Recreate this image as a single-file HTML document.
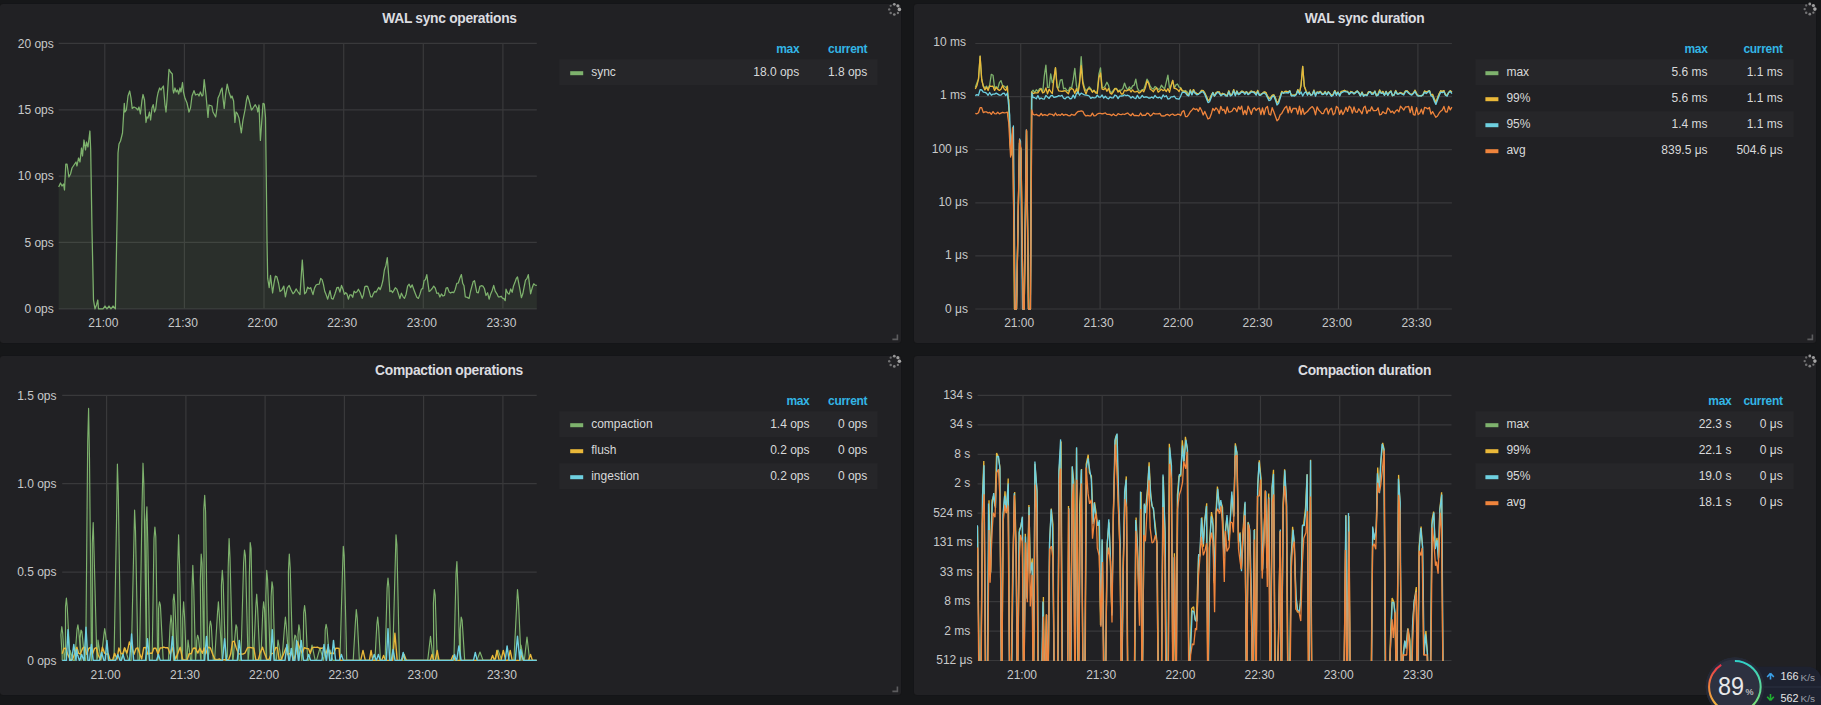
<!DOCTYPE html>
<html><head><meta charset="utf-8"><style>
html,body{margin:0;padding:0;background:#161719;width:1821px;height:705px;overflow:hidden}
body{position:relative;font-family:"Liberation Sans",sans-serif}
.p{position:absolute;background:#212124;border-radius:3px;box-shadow:0 0 1px #111214}
svg{position:absolute;left:0;top:0}
text{font-family:"Liberation Sans",sans-serif;font-size:12px;fill:#d8d9da}
.ax text{fill:#c8c9ca}
.tt{font-size:13.8px;font-weight:bold;fill:#dcdde0;letter-spacing:-0.3px}
.hd{font-weight:bold;fill:#33b5e5;letter-spacing:-0.3px}
</style></head><body>
<div class="p" style="left:0px;top:4px;width:901px;height:339px"></div><div class="p" style="left:914px;top:4px;width:902px;height:339px"></div><div class="p" style="left:0px;top:356px;width:901px;height:339px"></div><div class="p" style="left:914px;top:356px;width:902px;height:339px"></div>
<svg width="1821" height="705" viewBox="0 0 1821 705">
<g stroke="#39393b" stroke-width="1.2"><line x1="58.7" y1="43.4" x2="536.8" y2="43.4"/><line x1="58.7" y1="109.8" x2="536.8" y2="109.8"/><line x1="58.7" y1="176.1" x2="536.8" y2="176.1"/><line x1="58.7" y1="242.4" x2="536.8" y2="242.4"/><line x1="58.7" y1="308.8" x2="536.8" y2="308.8"/><line x1="104.8" y1="43.4" x2="104.8" y2="308.8"/><line x1="184.4" y1="43.4" x2="184.4" y2="308.8"/><line x1="264" y1="43.4" x2="264" y2="308.8"/><line x1="343.7" y1="43.4" x2="343.7" y2="308.8"/><line x1="423.3" y1="43.4" x2="423.3" y2="308.8"/><line x1="502.9" y1="43.4" x2="502.9" y2="308.8"/><line x1="975.3" y1="43.5" x2="1451.9" y2="43.5"/><line x1="975.3" y1="96.6" x2="1451.9" y2="96.6"/><line x1="975.3" y1="149.7" x2="1451.9" y2="149.7"/><line x1="975.3" y1="202.8" x2="1451.9" y2="202.8"/><line x1="975.3" y1="255.9" x2="1451.9" y2="255.9"/><line x1="975.3" y1="309" x2="1451.9" y2="309"/><line x1="1020.7" y1="43.5" x2="1020.7" y2="309"/><line x1="1100.1" y1="43.5" x2="1100.1" y2="309"/><line x1="1179.6" y1="43.5" x2="1179.6" y2="309"/><line x1="1259" y1="43.5" x2="1259" y2="309"/><line x1="1338.5" y1="43.5" x2="1338.5" y2="309"/><line x1="1417.9" y1="43.5" x2="1417.9" y2="309"/><line x1="62.2" y1="395.4" x2="536.7" y2="395.4"/><line x1="62.2" y1="483.7" x2="536.7" y2="483.7"/><line x1="62.2" y1="572.1" x2="536.7" y2="572.1"/><line x1="62.2" y1="660.4" x2="536.7" y2="660.4"/><line x1="106.6" y1="395.4" x2="106.6" y2="660.4"/><line x1="185.9" y1="395.4" x2="185.9" y2="660.4"/><line x1="265.1" y1="395.4" x2="265.1" y2="660.4"/><line x1="344.4" y1="395.4" x2="344.4" y2="660.4"/><line x1="423.6" y1="395.4" x2="423.6" y2="660.4"/><line x1="502.9" y1="395.4" x2="502.9" y2="660.4"/><line x1="977.6" y1="395.4" x2="1451.5" y2="395.4"/><line x1="977.6" y1="424.9" x2="1451.5" y2="424.9"/><line x1="977.6" y1="454.3" x2="1451.5" y2="454.3"/><line x1="977.6" y1="483.8" x2="1451.5" y2="483.8"/><line x1="977.6" y1="513.2" x2="1451.5" y2="513.2"/><line x1="977.6" y1="542.7" x2="1451.5" y2="542.7"/><line x1="977.6" y1="572.2" x2="1451.5" y2="572.2"/><line x1="977.6" y1="601.6" x2="1451.5" y2="601.6"/><line x1="977.6" y1="631.1" x2="1451.5" y2="631.1"/><line x1="977.6" y1="660.5" x2="1451.5" y2="660.5"/><line x1="1023" y1="395.4" x2="1023" y2="660.4"/><line x1="1102.2" y1="395.4" x2="1102.2" y2="660.4"/><line x1="1181.4" y1="395.4" x2="1181.4" y2="660.4"/><line x1="1260.5" y1="395.4" x2="1260.5" y2="660.4"/><line x1="1339.7" y1="395.4" x2="1339.7" y2="660.4"/><line x1="1418.9" y1="395.4" x2="1418.9" y2="660.4"/></g><path d="M58.7,187 L60.5,183 L62,186 L63.5,184 L64.5,190 L65.8,164 L67,164 L68.9,177 L70.5,174 L72,168 L74,165 L76,162 L77,166 L78.5,158 L80,162 L81.5,148 L82.5,156 L84,140 L85.5,150 L86.5,142 L88,147 L89.9,131 L90.7,150 L92,230 L93.5,300 L95,308.8 L96.5,305 L97.8,300 L98.5,308.8 L103,308.8 L105,306 L107,308.8 L109,306 L111,308.8 L113,306 L115.4,308.8 L117.4,200 L118,153 L119,144 L120.5,141 L122.5,133 L124.3,103.4 L125,112 L126.4,109.8 L128,96 L129.7,91 L131,98 L132.2,108.5 L134,107 L136,108 L137.9,110 L139,107 L140.4,114 L142,100 L143,94.5 L144.5,100 L146,122.5 L147,117 L148,118 L149.5,112 L150.6,120 L152,108 L153.2,104.7 L154.5,112 L155.7,109 L157,98 L158,93 L159.6,88 L161,90 L162,88 L163.4,86 L165,105 L166,112 L167,100 L169,69.4 L170.5,72 L172.3,74 L173,90 L173.6,93 L175,88 L176.2,92 L177.5,90 L178.7,94 L180,88 L181,92 L182.5,82.5 L183.5,92 L185,98.3 L187,103 L189,112 L190.5,108 L192,96 L194,90.6 L195.5,95 L197.9,94 L199,96 L200.4,92 L202,96 L203,95 L204.2,79.6 L206,95 L208,117.4 L209,105 L211.9,106 L213,112 L215.7,117 L217,108 L218,98 L219.6,94.5 L221,90 L222.1,88 L223,98 L224.2,108.5 L225.5,95 L227.2,84.2 L229,92 L231,98 L232,96 L233.6,101 L234.9,122.5 L236,112 L237.4,113.6 L239,118 L241.3,132.8 L243,120 L245,110 L246.5,100 L247.6,95.7 L249,100 L251.5,110 L253,108 L255.3,104.7 L257,108 L257.8,112 L259,105 L260.4,140.4 L261.5,125 L263,103.4 L264.3,104 L265.5,117.4 L266.3,178.7 L267,240 L267.7,278.4 L269.2,287.7 L270.5,275.4 L272.6,293 L274,283.2 L275.4,276.1 L276.9,276.9 L278.5,283 L280,291.5 L281.9,289.9 L283.8,286.1 L285.4,296.9 L287.3,287.9 L289.2,285.4 L291.1,289.9 L293,293.8 L294.6,292 L296.1,288.9 L297.7,291.5 L300,294.6 L302.3,260 L304.6,293.8 L306.1,292.3 L307.6,287.2 L309.2,288.7 L310.7,287.7 L313,294.6 L314.5,288.1 L316.1,285 L317.6,284.3 L319.2,284.1 L320.7,278.4 L322.1,279.6 L323.4,284.4 L324.8,291.5 L326.1,294.6 L327.7,299.2 L330,290.7 L331.5,298.4 L333,299.2 L334.9,294 L336.9,287.7 L338.4,287.3 L339.9,292.1 L341.5,285.4 L343,289.2 L344.4,294.4 L345.7,292.6 L347,294 L348.4,299.2 L349.8,294.9 L351.3,294.9 L352.7,297.3 L354.1,291.1 L355.5,292.7 L357,291.7 L358.4,289.2 L360.3,292.8 L362.2,298.4 L363.5,294.7 L364.8,286.9 L366.1,286.1 L367.6,286.4 L369.2,291.1 L370.7,296.9 L372.1,296.9 L373.4,293.6 L374.8,291.4 L376.1,292.2 L377.4,289.8 L378.8,287.3 L380.1,289.7 L381.5,286.1 L382.9,280.5 L384.4,270 L385.9,265.4 L387.3,257.7 L389.9,291.5 L391.2,290.7 L392.6,292.5 L393.9,290.4 L395.3,287.7 L396.9,289.1 L398.4,293.8 L399.9,298.6 L401.4,293.2 L403,296.6 L404.5,298.4 L406.1,294.2 L407.6,286.1 L409.1,284.2 L410.6,287.6 L412.2,284.9 L413.7,289.2 L415.3,293.5 L416.8,297.3 L418.4,298.4 L419.9,294.4 L421.4,289.2 L422.8,288.4 L424.1,280.5 L425.4,279.7 L426.8,274.6 L429.1,291.5 L430.6,290.4 L432.2,288.5 L433.7,286.1 L435.3,288.1 L436.8,293.3 L438.4,293 L439.9,297 L441.4,294 L443,296 L444.5,295.4 L446.1,288.2 L447.6,287.7 L449.1,291.9 L450.6,293 L452.1,292.1 L453.7,292.7 L455.2,289.4 L456.8,283.4 L458.3,283 L459.9,277.9 L461.4,274.6 L462.7,283.3 L464,285.8 L465.3,296.9 L467.2,297.4 L469.1,298.4 L470.5,291.5 L471.8,286.6 L473.1,281.8 L474.5,280.7 L476.8,292.3 L478.3,292.8 L479.9,286.4 L481.4,285.7 L482.9,286.1 L484.4,288.5 L486,295.5 L487.6,292.7 L489.1,299.2 L490.6,294.2 L492.2,290.4 L493.7,285.4 L495.2,291.2 L496.8,293.6 L498.3,296.8 L499.8,296.9 L501.1,296.2 L502.5,298.2 L503.9,298.7 L505.2,300.7 L506,289.2 L507.6,292.9 L509.1,294.2 L510.7,288.9 L512.2,292.3 L513.5,286 L514.9,282.6 L516.2,278.7 L517.5,276.9 L519.5,287.2 L521.4,297.7 L522.8,293.8 L524.2,286.7 L525.5,280.1 L526.9,278.6 L528.3,274.6 L530.6,293.8 L532.2,287.8 L533.7,283.8 L535.2,285.1 L536.8,285.4 L536.8,308.8 L58.7,308.8 Z" fill="#7eb26d" fill-opacity="0.1" stroke="none"/><path d="M58.7,187 L60.5,183 L62,186 L63.5,184 L64.5,190 L65.8,164 L67,164 L68.9,177 L70.5,174 L72,168 L74,165 L76,162 L77,166 L78.5,158 L80,162 L81.5,148 L82.5,156 L84,140 L85.5,150 L86.5,142 L88,147 L89.9,131 L90.7,150 L92,230 L93.5,300 L95,308.8 L96.5,305 L97.8,300 L98.5,308.8 L103,308.8 L105,306 L107,308.8 L109,306 L111,308.8 L113,306 L115.4,308.8 L117.4,200 L118,153 L119,144 L120.5,141 L122.5,133 L124.3,103.4 L125,112 L126.4,109.8 L128,96 L129.7,91 L131,98 L132.2,108.5 L134,107 L136,108 L137.9,110 L139,107 L140.4,114 L142,100 L143,94.5 L144.5,100 L146,122.5 L147,117 L148,118 L149.5,112 L150.6,120 L152,108 L153.2,104.7 L154.5,112 L155.7,109 L157,98 L158,93 L159.6,88 L161,90 L162,88 L163.4,86 L165,105 L166,112 L167,100 L169,69.4 L170.5,72 L172.3,74 L173,90 L173.6,93 L175,88 L176.2,92 L177.5,90 L178.7,94 L180,88 L181,92 L182.5,82.5 L183.5,92 L185,98.3 L187,103 L189,112 L190.5,108 L192,96 L194,90.6 L195.5,95 L197.9,94 L199,96 L200.4,92 L202,96 L203,95 L204.2,79.6 L206,95 L208,117.4 L209,105 L211.9,106 L213,112 L215.7,117 L217,108 L218,98 L219.6,94.5 L221,90 L222.1,88 L223,98 L224.2,108.5 L225.5,95 L227.2,84.2 L229,92 L231,98 L232,96 L233.6,101 L234.9,122.5 L236,112 L237.4,113.6 L239,118 L241.3,132.8 L243,120 L245,110 L246.5,100 L247.6,95.7 L249,100 L251.5,110 L253,108 L255.3,104.7 L257,108 L257.8,112 L259,105 L260.4,140.4 L261.5,125 L263,103.4 L264.3,104 L265.5,117.4 L266.3,178.7 L267,240 L267.7,278.4 L269.2,287.7 L270.5,275.4 L272.6,293 L274,283.2 L275.4,276.1 L276.9,276.9 L278.5,283 L280,291.5 L281.9,289.9 L283.8,286.1 L285.4,296.9 L287.3,287.9 L289.2,285.4 L291.1,289.9 L293,293.8 L294.6,292 L296.1,288.9 L297.7,291.5 L300,294.6 L302.3,260 L304.6,293.8 L306.1,292.3 L307.6,287.2 L309.2,288.7 L310.7,287.7 L313,294.6 L314.5,288.1 L316.1,285 L317.6,284.3 L319.2,284.1 L320.7,278.4 L322.1,279.6 L323.4,284.4 L324.8,291.5 L326.1,294.6 L327.7,299.2 L330,290.7 L331.5,298.4 L333,299.2 L334.9,294 L336.9,287.7 L338.4,287.3 L339.9,292.1 L341.5,285.4 L343,289.2 L344.4,294.4 L345.7,292.6 L347,294 L348.4,299.2 L349.8,294.9 L351.3,294.9 L352.7,297.3 L354.1,291.1 L355.5,292.7 L357,291.7 L358.4,289.2 L360.3,292.8 L362.2,298.4 L363.5,294.7 L364.8,286.9 L366.1,286.1 L367.6,286.4 L369.2,291.1 L370.7,296.9 L372.1,296.9 L373.4,293.6 L374.8,291.4 L376.1,292.2 L377.4,289.8 L378.8,287.3 L380.1,289.7 L381.5,286.1 L382.9,280.5 L384.4,270 L385.9,265.4 L387.3,257.7 L389.9,291.5 L391.2,290.7 L392.6,292.5 L393.9,290.4 L395.3,287.7 L396.9,289.1 L398.4,293.8 L399.9,298.6 L401.4,293.2 L403,296.6 L404.5,298.4 L406.1,294.2 L407.6,286.1 L409.1,284.2 L410.6,287.6 L412.2,284.9 L413.7,289.2 L415.3,293.5 L416.8,297.3 L418.4,298.4 L419.9,294.4 L421.4,289.2 L422.8,288.4 L424.1,280.5 L425.4,279.7 L426.8,274.6 L429.1,291.5 L430.6,290.4 L432.2,288.5 L433.7,286.1 L435.3,288.1 L436.8,293.3 L438.4,293 L439.9,297 L441.4,294 L443,296 L444.5,295.4 L446.1,288.2 L447.6,287.7 L449.1,291.9 L450.6,293 L452.1,292.1 L453.7,292.7 L455.2,289.4 L456.8,283.4 L458.3,283 L459.9,277.9 L461.4,274.6 L462.7,283.3 L464,285.8 L465.3,296.9 L467.2,297.4 L469.1,298.4 L470.5,291.5 L471.8,286.6 L473.1,281.8 L474.5,280.7 L476.8,292.3 L478.3,292.8 L479.9,286.4 L481.4,285.7 L482.9,286.1 L484.4,288.5 L486,295.5 L487.6,292.7 L489.1,299.2 L490.6,294.2 L492.2,290.4 L493.7,285.4 L495.2,291.2 L496.8,293.6 L498.3,296.8 L499.8,296.9 L501.1,296.2 L502.5,298.2 L503.9,298.7 L505.2,300.7 L506,289.2 L507.6,292.9 L509.1,294.2 L510.7,288.9 L512.2,292.3 L513.5,286 L514.9,282.6 L516.2,278.7 L517.5,276.9 L519.5,287.2 L521.4,297.7 L522.8,293.8 L524.2,286.7 L525.5,280.1 L526.9,278.6 L528.3,274.6 L530.6,293.8 L532.2,287.8 L533.7,283.8 L535.2,285.1 L536.8,285.4" fill="none" stroke="#7eb26d" stroke-width="1.25" stroke-linejoin="round"/><path d="M975.3,87.4 L976.9,83.1 L978.5,79.1 L980.1,56.2 L981.7,79.5 L983.3,86 L984.9,88 L986.5,86.1 L988.1,89.1 L989.7,85 L991.3,74.3 L993,75.2 L994.6,87.8 L996.2,86.8 L997.8,88.4 L999.4,82.7 L1001,80.6 L1002.6,85.6 L1004.2,86.1 L1005.8,87.6 L1007.4,86 L1007.8,95 L1008.7,100 L1010,140 L1011,155 L1013,128 L1014.5,309 L1016.5,309 L1019.5,143 L1021,150 L1023,309 L1024.2,309 L1026.6,131 L1028.5,309 L1030.3,309 L1031.6,92 L1033.1,90.2 L1034.7,92.6 L1036.3,89.8 L1037.9,91.5 L1039.5,88.7 L1041.1,88.4 L1042.7,92.4 L1044.3,76.1 L1045.9,65.1 L1047.5,87.4 L1049.1,87.4 L1050.7,73.9 L1052.3,82.7 L1053.9,78.9 L1055.5,67.7 L1057.1,86.9 L1058.7,87.9 L1060.3,80.2 L1062,79.5 L1063.6,88.8 L1065.2,88.2 L1066.8,90.4 L1068.4,91 L1070,87.2 L1071.6,88.2 L1073.2,79.9 L1074.8,68.3 L1076.4,85.2 L1078,92.3 L1079.6,80.8 L1081.2,56.7 L1082.8,81.1 L1084.4,87.4 L1086,91 L1087.6,89.3 L1089.2,86.9 L1090.8,88.9 L1092.4,91.9 L1094,90.2 L1095.7,92.6 L1097.3,91.5 L1098.9,74.2 L1100.5,67.8 L1102.1,87.8 L1103.7,87.7 L1105.3,85.8 L1106.9,82.3 L1108.5,85.2 L1110.1,91.6 L1111.7,92.7 L1113.3,90.3 L1114.9,88.3 L1116.5,88.5 L1118.1,91 L1119.7,90.1 L1121.3,90.1 L1122.9,88.5 L1124.5,83.1 L1126.1,87.4 L1127.7,90.2 L1129.4,86.9 L1131,89.1 L1132.6,85.9 L1134.2,85.1 L1135.8,79.1 L1137.4,88.2 L1139,90.8 L1140.6,91.3 L1142.2,89.7 L1143.8,89.3 L1145.4,84.6 L1147,79.1 L1148.6,81.9 L1150.2,86.2 L1151.8,88.3 L1153.4,89.2 L1155,86.5 L1156.6,87.6 L1158.2,89.5 L1159.8,88.9 L1161.4,85.2 L1163.1,87.5 L1164.7,88.7 L1166.3,82.2 L1167.9,75.2 L1169.5,88.1 L1171.1,85.6 L1172.7,80.4 L1174.3,88.4 L1175.9,84.9 L1177.5,84 L1179.1,87.1 L1180.7,87.7 L1182.3,90.9 L1183.9,91 L1185.5,90.5 L1187.1,91.9 L1188.7,95.1 L1190.3,89.9 L1191.9,93.9 L1193.5,89.6 L1195.1,92.8 L1196.8,93.4 L1198.4,93.9 L1200,92.7 L1201.6,90.5 L1203.2,90.6 L1204.8,93 L1206.4,96.5 L1208,100.6 L1209.6,99.7 L1211.2,95.6 L1212.8,92.5 L1214.4,95.9 L1216,92.9 L1217.6,91.8 L1219.2,91.8 L1220.8,95.6 L1222.4,93.3 L1224,94 L1225.6,94.7 L1227.2,95.8 L1228.8,90.8 L1230.4,94.9 L1232.1,94.3 L1233.7,89.7 L1235.3,94.9 L1236.9,91 L1238.5,94.4 L1240.1,92.8 L1241.7,91.1 L1243.3,91.7 L1244.9,93 L1246.5,91.6 L1248.1,94.2 L1249.7,92.5 L1251.3,91.1 L1252.9,91.9 L1254.5,92 L1256.1,94.1 L1257.7,90.4 L1259.3,94.9 L1260.9,94.5 L1262.5,93.2 L1264.1,92 L1265.8,92.3 L1267.4,95.9 L1269,98.6 L1270.6,97.9 L1272.2,95.4 L1273.8,94.8 L1275.4,97.9 L1277,103 L1278.6,101.2 L1280.2,96.1 L1281.8,91.5 L1283.4,93 L1285,91.4 L1286.6,91.4 L1288.2,91.8 L1289.8,90.9 L1291.4,95.5 L1293,95.2 L1294.6,95.1 L1296.2,94.2 L1297.8,89.6 L1299.5,92.8 L1301.1,84.8 L1302.7,66.3 L1304.3,86.3 L1305.9,90.5 L1307.5,94.1 L1309.1,92.1 L1310.7,95 L1312.3,94.5 L1313.9,90.1 L1315.5,94.9 L1317.1,92.1 L1318.7,92.4 L1320.3,91.4 L1321.9,93.4 L1323.5,94.2 L1325.1,91.5 L1326.7,94.5 L1328.3,91.8 L1329.9,93.4 L1331.5,95.5 L1333.2,94.2 L1334.8,90.6 L1336.4,94 L1338,92.2 L1339.6,95.3 L1341.2,91.5 L1342.8,91 L1344.4,90.4 L1346,91.4 L1347.6,91.5 L1349.2,94 L1350.8,91.5 L1352.4,92.1 L1354,93.7 L1355.6,92.1 L1357.2,91 L1358.8,92.6 L1360.4,95.6 L1362,92.1 L1363.6,95.7 L1365.2,94.5 L1366.9,95.1 L1368.5,91.7 L1370.1,91.6 L1371.7,92.9 L1373.3,93.6 L1374.9,91.1 L1376.5,95.7 L1378.1,93.8 L1379.7,90 L1381.3,93.3 L1382.9,91.5 L1384.5,95.1 L1386.1,91.3 L1387.7,95.1 L1389.3,92.2 L1390.9,91 L1392.5,95.7 L1394.1,94.9 L1395.7,90.5 L1397.3,93.8 L1398.9,93.3 L1400.5,92.5 L1402.2,93.4 L1403.8,93.8 L1405.4,91 L1407,90.8 L1408.6,92.4 L1410.2,94.1 L1411.8,94.3 L1413.4,93 L1415,90.2 L1416.6,93.6 L1418.2,95.5 L1419.8,95.6 L1421.4,95.8 L1423,94.7 L1424.6,91 L1426.2,92.1 L1427.8,91.4 L1429.4,90.6 L1431,94.9 L1432.6,94.5 L1434.2,98.9 L1435.9,102.4 L1437.5,98.1 L1439.1,93.7 L1440.7,90.7 L1442.3,91.6 L1443.9,90.6 L1445.5,94.9 L1447.1,95.3 L1448.7,92.4 L1450.3,90.6 L1451.9,92.2" fill="none" stroke="#7eb26d" stroke-width="1.3" stroke-linejoin="round"/><path d="M975.3,89 L976.9,85.8 L978.5,79.1 L980.1,56.2 L981.7,79.5 L983.3,86.3 L984.9,89.9 L986.5,87.2 L988.1,90.5 L989.7,86 L991.3,86.3 L993,86.2 L994.6,90.4 L996.2,87.3 L997.8,89.4 L999.4,90.4 L1001,89.2 L1002.6,85.6 L1004.2,89 L1005.8,90.4 L1007.4,86.6 L1007.8,95 L1008.7,100 L1010,140 L1011,155 L1013,128 L1014.5,309 L1016.5,309 L1019.5,143 L1021,150 L1023,309 L1024.2,309 L1026.6,131 L1028.5,309 L1030.3,309 L1031.6,92 L1033.1,93.6 L1034.7,92.9 L1036.3,92.8 L1037.9,92.9 L1039.5,90.3 L1041.1,88.9 L1042.7,93 L1044.3,92 L1045.9,87.9 L1047.5,93.8 L1049.1,89.2 L1050.7,91.6 L1052.3,93.6 L1053.9,78.9 L1055.5,67.7 L1057.1,86.9 L1058.7,90.8 L1060.3,91.1 L1062,91.4 L1063.6,91 L1065.2,90.6 L1066.8,92.2 L1068.4,93.8 L1070,89.5 L1071.6,88.7 L1073.2,89.3 L1074.8,93.5 L1076.4,88.7 L1078,93.9 L1079.6,83.2 L1081.2,65.6 L1082.8,83.5 L1084.4,89.9 L1086,94.1 L1087.6,89.5 L1089.2,88.6 L1090.8,89.5 L1092.4,92.3 L1094,90.5 L1095.7,92.9 L1097.3,93.3 L1098.9,77.8 L1100.5,72.9 L1102.1,89.1 L1103.7,89.7 L1105.3,87.9 L1106.9,91.3 L1108.5,88.5 L1110.1,93.1 L1111.7,94.1 L1113.3,91.9 L1114.9,88.6 L1116.5,88.8 L1118.1,92.1 L1119.7,90.7 L1121.3,94 L1122.9,94 L1124.5,90.2 L1126.1,91 L1127.7,90.4 L1129.4,89.3 L1131,92 L1132.6,89.9 L1134.2,91.9 L1135.8,91.8 L1137.4,91.2 L1139,93.1 L1140.6,92.2 L1142.2,90.1 L1143.8,91.8 L1145.4,87.8 L1147,81 L1148.6,83.3 L1150.2,89.1 L1151.8,90.2 L1153.4,91.7 L1155,89.4 L1156.6,87.9 L1158.2,92.2 L1159.8,90.8 L1161.4,89.1 L1163.1,90.7 L1164.7,89.5 L1166.3,91.5 L1167.9,88.6 L1169.5,92.3 L1171.1,85.6 L1172.7,80.4 L1174.3,88.4 L1175.9,88.6 L1177.5,89.7 L1179.1,91.6 L1180.7,88.1 L1182.3,90.9 L1183.9,91.4 L1185.5,91.4 L1187.1,94.3 L1188.7,95.1 L1190.3,89.9 L1191.9,93.9 L1193.5,89.6 L1195.1,92.8 L1196.8,93.4 L1198.4,93.9 L1200,92.7 L1201.6,90.5 L1203.2,90.6 L1204.8,93 L1206.4,96.5 L1208,100.6 L1209.6,99.7 L1211.2,95.6 L1212.8,92.5 L1214.4,95.9 L1216,92.9 L1217.6,91.8 L1219.2,91.8 L1220.8,95.6 L1222.4,93.3 L1224,94 L1225.6,94.7 L1227.2,95.8 L1228.8,90.8 L1230.4,94.9 L1232.1,94.3 L1233.7,89.7 L1235.3,94.9 L1236.9,91 L1238.5,94.4 L1240.1,92.8 L1241.7,91.1 L1243.3,91.7 L1244.9,93 L1246.5,91.6 L1248.1,94.2 L1249.7,92.5 L1251.3,91.1 L1252.9,91.9 L1254.5,92 L1256.1,94.1 L1257.7,90.4 L1259.3,94.9 L1260.9,94.5 L1262.5,93.2 L1264.1,92 L1265.8,92.3 L1267.4,95.9 L1269,98.6 L1270.6,97.9 L1272.2,95.4 L1273.8,94.8 L1275.4,97.9 L1277,103 L1278.6,101.2 L1280.2,96.1 L1281.8,91.5 L1283.4,93 L1285,91.4 L1286.6,91.4 L1288.2,91.8 L1289.8,90.9 L1291.4,95.5 L1293,95.2 L1294.6,95.1 L1296.2,94.2 L1297.8,89.6 L1299.5,92.8 L1301.1,84.8 L1302.7,66.3 L1304.3,86.3 L1305.9,90.5 L1307.5,94.1 L1309.1,92.1 L1310.7,95 L1312.3,94.5 L1313.9,90.1 L1315.5,94.9 L1317.1,92.1 L1318.7,92.4 L1320.3,91.4 L1321.9,93.4 L1323.5,94.2 L1325.1,91.5 L1326.7,94.5 L1328.3,91.8 L1329.9,93.4 L1331.5,95.5 L1333.2,94.2 L1334.8,90.6 L1336.4,94 L1338,92.2 L1339.6,95.3 L1341.2,91.5 L1342.8,91 L1344.4,90.4 L1346,91.4 L1347.6,91.5 L1349.2,94 L1350.8,91.5 L1352.4,92.1 L1354,93.7 L1355.6,92.1 L1357.2,91 L1358.8,92.6 L1360.4,95.6 L1362,92.1 L1363.6,95.7 L1365.2,94.5 L1366.9,95.1 L1368.5,91.7 L1370.1,91.6 L1371.7,92.9 L1373.3,93.6 L1374.9,91.1 L1376.5,95.7 L1378.1,93.8 L1379.7,90 L1381.3,93.3 L1382.9,91.5 L1384.5,95.1 L1386.1,91.3 L1387.7,95.1 L1389.3,92.2 L1390.9,91 L1392.5,95.7 L1394.1,94.9 L1395.7,90.5 L1397.3,93.8 L1398.9,93.3 L1400.5,92.5 L1402.2,93.4 L1403.8,93.8 L1405.4,91 L1407,90.8 L1408.6,92.4 L1410.2,94.1 L1411.8,94.3 L1413.4,93 L1415,90.2 L1416.6,93.6 L1418.2,95.5 L1419.8,95.6 L1421.4,95.8 L1423,94.7 L1424.6,91 L1426.2,92.1 L1427.8,91.4 L1429.4,90.6 L1431,94.9 L1432.6,94.5 L1434.2,98.9 L1435.9,102.4 L1437.5,98.1 L1439.1,93.7 L1440.7,90.7 L1442.3,91.6 L1443.9,90.6 L1445.5,94.9 L1447.1,95.3 L1448.7,92.4 L1450.3,90.6 L1451.9,92.2" fill="none" stroke="#eab839" stroke-width="1.3" stroke-linejoin="round"/><path d="M975.3,95.6 L976.9,94.6 L978.5,95.3 L980.1,89.6 L981.7,90 L983.3,92.2 L984.9,92.3 L986.5,93.1 L988.1,95.3 L989.7,92.5 L991.3,95.2 L993,94.1 L994.6,94.1 L996.2,93.1 L997.8,94.1 L999.4,95.1 L1001,95.1 L1002.6,93.5 L1004.2,93.1 L1005.8,95.6 L1007.4,93 L1007.8,97 L1008.7,106 L1009.7,115 L1010.6,150 L1013.4,126 L1015.2,309 L1016.5,309 L1019.6,139 L1020.5,141 L1022.5,309 L1024,309 L1026.3,130 L1028.5,309 L1030.5,309 L1031.8,93 L1033.1,97.5 L1034.7,97.7 L1036.3,98.8 L1037.9,95.6 L1039.5,99.1 L1041.1,98 L1042.7,98.8 L1044.3,99.1 L1045.9,95.4 L1047.5,97.1 L1049.1,98.4 L1050.7,95.9 L1052.3,95.4 L1053.9,97.4 L1055.5,97 L1057.1,96.7 L1058.7,95.6 L1060.3,96.2 L1062,95.3 L1063.6,98.2 L1065.2,98.8 L1066.8,97.1 L1068.4,96.9 L1070,98.9 L1071.6,98.5 L1073.2,95.1 L1074.8,98.2 L1076.4,93.7 L1078,91.8 L1079.6,95.2 L1081.2,93.1 L1082.8,94 L1084.4,94.9 L1086,95.1 L1087.6,95.3 L1089.2,96 L1090.8,98.4 L1092.4,97.3 L1094,97.8 L1095.7,97.6 L1097.3,95.1 L1098.9,97.2 L1100.5,97.1 L1102.1,95 L1103.7,98.1 L1105.3,96.3 L1106.9,98 L1108.5,98.9 L1110.1,97 L1111.7,97.8 L1113.3,97.9 L1114.9,95 L1116.5,95.9 L1118.1,98.6 L1119.7,96.1 L1121.3,96 L1122.9,95.9 L1124.5,94.8 L1126.1,95.7 L1127.7,95.2 L1129.4,96.1 L1131,98.1 L1132.6,96.5 L1134.2,98 L1135.8,98.7 L1137.4,95.4 L1139,98.3 L1140.6,97.8 L1142.2,95.4 L1143.8,97.3 L1145.4,97 L1147,97 L1148.6,98 L1150.2,98 L1151.8,97 L1153.4,98.2 L1155,95.4 L1156.6,97.3 L1158.2,97.8 L1159.8,97.1 L1161.4,98.7 L1163.1,94.9 L1164.7,96.8 L1166.3,95.7 L1167.9,99 L1169.5,98.7 L1171.1,96.9 L1172.7,96.8 L1174.3,96.2 L1175.9,98.5 L1177.5,98.8 L1179.1,99.2 L1180.7,96 L1182.3,92.3 L1183.9,92.2 L1185.5,92.8 L1187.1,95.2 L1188.7,96 L1190.3,91 L1191.9,94.9 L1193.5,91 L1195.1,93.3 L1196.8,94.8 L1198.4,94.4 L1200,92.9 L1201.6,91.9 L1203.2,91.9 L1204.8,94.4 L1206.4,98.5 L1208,102.6 L1209.6,101.7 L1211.2,97.6 L1212.8,92.6 L1214.4,96.1 L1216,94.2 L1217.6,92.2 L1219.2,93.2 L1220.8,95.6 L1222.4,94.7 L1224,94 L1225.6,95.9 L1227.2,96.1 L1228.8,91.6 L1230.4,96 L1232.1,95 L1233.7,90.9 L1235.3,95.9 L1236.9,91.4 L1238.5,94.6 L1240.1,93.6 L1241.7,92 L1243.3,92.4 L1244.9,94.3 L1246.5,92 L1248.1,94.6 L1249.7,93.5 L1251.3,92.1 L1252.9,92 L1254.5,93.1 L1256.1,95.2 L1257.7,91.8 L1259.3,95.3 L1260.9,95 L1262.5,93.5 L1264.1,93 L1265.8,94.3 L1267.4,97.4 L1269,100.6 L1270.6,99.9 L1272.2,96.8 L1273.8,95.9 L1275.4,99.9 L1277,105 L1278.6,103.2 L1280.2,98.1 L1281.8,92.7 L1283.4,93.1 L1285,92.8 L1286.6,92.7 L1288.2,93 L1289.8,90.9 L1291.4,95.9 L1293,95.7 L1294.6,96.1 L1296.2,94.7 L1297.8,90.7 L1299.5,94.3 L1301.1,92 L1302.7,96 L1304.3,93.1 L1305.9,91.7 L1307.5,95.3 L1309.1,92.5 L1310.7,95.1 L1312.3,94.9 L1313.9,90.9 L1315.5,96.2 L1317.1,92.2 L1318.7,93.5 L1320.3,92 L1321.9,94.5 L1323.5,94.4 L1325.1,92.3 L1326.7,94.8 L1328.3,92.1 L1329.9,93.9 L1331.5,96.3 L1333.2,95.2 L1334.8,91.3 L1336.4,95.4 L1338,92.3 L1339.6,96.1 L1341.2,92.8 L1342.8,92.2 L1344.4,91.3 L1346,91.9 L1347.6,91.8 L1349.2,94.3 L1350.8,92.5 L1352.4,92.4 L1354,93.8 L1355.6,92.9 L1357.2,91.2 L1358.8,93 L1360.4,96 L1362,92.7 L1363.6,96.3 L1365.2,94.8 L1366.9,95.7 L1368.5,93 L1370.1,91.6 L1371.7,94.3 L1373.3,94.2 L1374.9,91.5 L1376.5,95.9 L1378.1,95.2 L1379.7,91.4 L1381.3,93.4 L1382.9,92.9 L1384.5,95.3 L1386.1,91.9 L1387.7,95.3 L1389.3,92.9 L1390.9,91.4 L1392.5,95.7 L1394.1,94.9 L1395.7,91.4 L1397.3,94.2 L1398.9,94 L1400.5,93.2 L1402.2,94.2 L1403.8,95 L1405.4,91.7 L1407,91.4 L1408.6,93.2 L1410.2,94.3 L1411.8,95.1 L1413.4,93.5 L1415,91.5 L1416.6,94.8 L1418.2,96.2 L1419.8,95.8 L1421.4,95.9 L1423,94.9 L1424.6,92.2 L1426.2,93.5 L1427.8,92.2 L1429.4,90.9 L1431,95.9 L1432.6,96.5 L1434.2,100.9 L1435.9,104.4 L1437.5,100.1 L1439.1,95.7 L1440.7,92.2 L1442.3,92.7 L1443.9,91.7 L1445.5,95.3 L1447.1,96.2 L1448.7,92.5 L1450.3,91.5 L1451.9,93.6" fill="none" stroke="#6ed0e0" stroke-width="1.3" stroke-linejoin="round"/><path d="M975.3,113.4 L976.9,113.8 L978.5,112.7 L980.1,107.7 L981.7,107.7 L983.3,112.6 L984.9,111.9 L986.5,111.9 L988.1,113 L989.7,112.3 L991.3,114.4 L993,111.6 L994.6,113.6 L996.2,113.8 L997.8,112.2 L999.4,113.9 L1001,113.1 L1002.6,112.3 L1004.2,112.8 L1005.8,112.6 L1007.4,112.1 L1007.8,117 L1008.7,122.5 L1010.6,157 L1012.5,128 L1015,309 L1016.5,309 L1019.5,140 L1021,150 L1023,309 L1024.2,309 L1026.5,130 L1028.5,309 L1030.5,309 L1031.8,110 L1033.1,114.4 L1034.7,115 L1036.3,114.4 L1037.9,115.5 L1039.5,115.9 L1041.1,113.4 L1042.7,115.5 L1044.3,114.7 L1045.9,115 L1047.5,115.7 L1049.1,113.8 L1050.7,114.2 L1052.3,114.4 L1053.9,115.8 L1055.5,113 L1057.1,115.5 L1058.7,114.7 L1060.3,115.4 L1062,113.8 L1063.6,115.3 L1065.2,114.5 L1066.8,114.6 L1068.4,115.7 L1070,115.9 L1071.6,114.3 L1073.2,115 L1074.8,115.2 L1076.4,113 L1078,111.5 L1079.6,111.3 L1081.2,110.9 L1082.8,111.3 L1084.4,114.5 L1086,116 L1087.6,115.4 L1089.2,115.8 L1090.8,115.8 L1092.4,113.1 L1094,115.9 L1095.7,115.6 L1097.3,114 L1098.9,113.3 L1100.5,113.4 L1102.1,113.9 L1103.7,113.5 L1105.3,112.9 L1106.9,114.4 L1108.5,114.3 L1110.1,114.5 L1111.7,115.6 L1113.3,114 L1114.9,115.3 L1116.5,115.6 L1118.1,113.7 L1119.7,114.3 L1121.3,114.7 L1122.9,114 L1124.5,114.5 L1126.1,113.7 L1127.7,113 L1129.4,114.6 L1131,115.7 L1132.6,113.4 L1134.2,115.6 L1135.8,115.5 L1137.4,115.6 L1139,115.8 L1140.6,113 L1142.2,115.6 L1143.8,115.1 L1145.4,115.3 L1147,113.1 L1148.6,113.7 L1150.2,116 L1151.8,115.1 L1153.4,113.1 L1155,113.9 L1156.6,113.8 L1158.2,113.8 L1159.8,113.3 L1161.4,115.9 L1163.1,116 L1164.7,115.9 L1166.3,114.6 L1167.9,114.5 L1169.5,115.8 L1171.1,114.5 L1172.7,114 L1174.3,115.3 L1175.9,115.2 L1177.5,114.2 L1179.1,114.3 L1180.7,115.6 L1182.3,111.5 L1183.9,110.7 L1185.5,116.6 L1187.1,116.6 L1188.7,114.6 L1190.3,111.8 L1191.9,110.1 L1193.5,108.3 L1195.1,109.6 L1196.8,108.9 L1198.4,111.3 L1200,107.5 L1201.6,110.5 L1203.2,115 L1204.8,111.4 L1206.4,115.2 L1208,119 L1209.6,118.2 L1211.2,114.3 L1212.8,108.5 L1214.4,110.5 L1216,107.9 L1217.6,109.6 L1219.2,113.6 L1220.8,106.3 L1222.4,110.3 L1224,109.5 L1225.6,113.7 L1227.2,107 L1228.8,112.1 L1230.4,111.8 L1232.1,111 L1233.7,108.1 L1235.3,108.7 L1236.9,111.7 L1238.5,106.6 L1240.1,109.5 L1241.7,106.1 L1243.3,114.6 L1244.9,110.3 L1246.5,114.6 L1248.1,106.2 L1249.7,109.8 L1251.3,114.3 L1252.9,109 L1254.5,107.8 L1256.1,110.5 L1257.7,108.8 L1259.3,108 L1260.9,114.6 L1262.5,108 L1264.1,114.5 L1265.8,107.9 L1267.4,106.5 L1269,114.1 L1270.6,115 L1272.2,107.7 L1273.8,111.8 L1275.4,116.3 L1277,120.8 L1278.6,119.2 L1280.2,114.7 L1281.8,113.4 L1283.4,110.3 L1285,107.7 L1286.6,106.3 L1288.2,112.9 L1289.8,106.6 L1291.4,112.7 L1293,108.5 L1294.6,108.4 L1296.2,108.5 L1297.8,114.2 L1299.5,106.2 L1301.1,114.6 L1302.7,108.3 L1304.3,114.4 L1305.9,112.6 L1307.5,111.5 L1309.1,109.3 L1310.7,107.8 L1312.3,106.6 L1313.9,108.9 L1315.5,114.9 L1317.1,106.9 L1318.7,110 L1320.3,111.6 L1321.9,113.6 L1323.5,113.6 L1325.1,109.4 L1326.7,108.2 L1328.3,114 L1329.9,109.6 L1331.5,108.1 L1333.2,114.9 L1334.8,113.4 L1336.4,106.4 L1338,107.7 L1339.6,114.4 L1341.2,110 L1342.8,114.5 L1344.4,111.6 L1346,107.3 L1347.6,111.4 L1349.2,106.1 L1350.8,107.7 L1352.4,113.2 L1354,106.9 L1355.6,111.8 L1357.2,112.3 L1358.8,108.8 L1360.4,111.1 L1362,113.8 L1363.6,107.8 L1365.2,106.1 L1366.9,113.4 L1368.5,110.1 L1370.1,111 L1371.7,106.8 L1373.3,110.5 L1374.9,110.7 L1376.5,110.4 L1378.1,107.8 L1379.7,114.8 L1381.3,114.3 L1382.9,111.6 L1384.5,113.1 L1386.1,113.6 L1387.7,108 L1389.3,109.5 L1390.9,112.5 L1392.5,111.1 L1394.1,113.5 L1395.7,111 L1397.3,109.8 L1398.9,111.9 L1400.5,106.2 L1402.2,108.1 L1403.8,110.1 L1405.4,107 L1407,106.8 L1408.6,106.4 L1410.2,112.6 L1411.8,106.5 L1413.4,114.6 L1415,115 L1416.6,107.7 L1418.2,114.6 L1419.8,113.1 L1421.4,109.2 L1423,114.1 L1424.6,107.3 L1426.2,107.9 L1427.8,108.9 L1429.4,107.5 L1431,114.1 L1432.6,111.6 L1434.2,114.5 L1435.9,117.3 L1437.5,116 L1439.1,113.2 L1440.7,111.2 L1442.3,110 L1443.9,106.4 L1445.5,111.8 L1447.1,112 L1448.7,106.3 L1450.3,109.9 L1451.9,107.2" fill="none" stroke="#ef843c" stroke-width="1.3" stroke-linejoin="round"/><path d="M62.2,660.4 L62.2,656.4 L60.9,635 L61.8,626.7 L62.7,633.1 L64.4,660.4 L65.4,651.9 L65.5,606.6 L66.4,598 L67.3,608 L70,660.4 L70,650.9 L70,650 L73.1,660.4 L74.7,660.4 L77,629.7 L77.9,624.8 L78.8,631.2 L81.1,660.4 L81.1,657.8 L80.1,638.3 L81,630 L81.9,631.6 L84.8,660.4 L85.7,660.4 L87.7,441.6 L88.6,408.4 L89.5,458.5 L91.5,660.4 L92.4,651.4 L92.3,543.4 L93.2,522.5 L94.1,553.7 L96.9,660.4 L97.5,657.5 L98,640 L101,660.4 L101,660.4 L103.8,635.6 L104.7,628.6 L105.6,634.6 L108.4,660.4 L114,660.4 L116.5,522 L117.4,464 L118.3,492.3 L120.8,660.4 L121.4,660.4 L125,648 L128.6,660.4 L131.2,660.4 L133.7,550.4 L134.6,510 L135.5,530.7 L138,660.4 L139.5,660.4 L142.1,503.7 L143,463.2 L143.9,485.2 L146.5,660.4 L146.7,652.9 L146,521.7 L146.9,506.8 L147.8,542.5 L149.8,660.4 L152.1,660.4 L154,538.6 L154.9,527.1 L155.8,536.6 L157.7,660.4 L158.6,656.3 L158.6,608.3 L159.5,601.8 L160.4,605.1 L163.2,660.4 L168.4,660.4 L170.1,625.7 L171,615.2 L171.9,623.2 L173.6,660.4 L173.8,651.6 L173.1,600.5 L174,594.2 L174.9,605.3 L177.4,660.4 L178,650.6 L177.7,567.5 L178.6,534.8 L179.5,563.5 L181.6,660.4 L182.6,650 L182.7,618.3 L183.6,601.8 L184.5,615.8 L186.3,660.4 L187.1,657.9 L188,640 L190.7,660.4 L191.8,660 L191.9,590.7 L192.8,565.4 L193.7,585.6 L195.5,660.4 L196.5,650.5 L196.7,640.7 L197.6,635.2 L198.5,637.9 L200.9,660.4 L201.1,659.2 L200.3,580.2 L201.2,554 L202.1,563.7 L203.9,660.4 L204.3,655.3 L203.8,509.3 L204.7,495.3 L205.6,512 L207.7,660.4 L209,651.8 L209.5,627.3 L210.4,621 L211.3,625.5 L213.3,660.4 L214.6,660.4 L217.5,613 L218.4,601.8 L219.3,614.7 L222.2,660.4 L222.2,660 L221.4,585.8 L222.3,570.4 L223.2,582.8 L225.6,660.4 L227.4,656.2 L228.2,567.2 L229.1,538.6 L230,557.8 L232.6,660.4 L233.1,660.4 L235.1,634.4 L236,624.8 L236.9,627.2 L238.9,660.4 L240.9,660.4 L243.6,563.1 L244.5,550.1 L245.4,555.6 L248.1,660.4 L249.1,651.3 L249.3,577.3 L250.2,542.5 L251.1,548.5 L253,660.4 L253.5,660.4 L255.8,606.7 L256.7,594.2 L257.6,608.1 L259.9,660.4 L260.8,660.4 L262.7,612.9 L263.6,601.8 L264.5,608.8 L266.4,660.4 L266.6,657.3 L265.8,596.3 L266.7,570.4 L267.6,580 L270.3,660.4 L271.1,652 L271.1,596.8 L272,581.9 L272.9,587.6 L274.9,660.4 L276.4,659.4 L278,640 L281.4,660.4 L281.9,660.4 L284.5,627.2 L285.4,617.1 L286.3,626.1 L288.9,660.4 L289.1,656.1 L288.4,571.9 L289.3,554 L290.2,567.7 L292.7,660.4 L293.8,659.4 L294,642 L294.9,635 L295.8,636.4 L298.6,660.4 L298.7,657.2 L298,634.7 L298.9,624.8 L299.8,630.1 L301.7,660.4 L303.2,649.8 L303.7,612.8 L304.6,605.6 L305.5,613.4 L307.7,660.4 L308.8,660.4 L312,645 L315.2,660.4 L316.5,660.4 L320,648 L323.5,660.4 L324.8,652.6 L325.2,630 L326.1,624.3 L327,628.5 L329.6,660.4 L329.8,650.3 L330,650 L332.8,660.4 L339.9,660.4 L342.4,574.1 L343.3,546.3 L344.2,555.9 L346.7,660.4 L353.2,660.4 L355.4,622.2 L356.3,609.5 L357.2,617.9 L359.4,660.4 L374.9,660.4 L376.8,625 L377.7,617.1 L378.6,626.9 L380.5,660.4 L385.1,660.4 L387.1,588.1 L388,578 L388.9,587.1 L390.9,660.4 L392.6,660.4 L395.1,568.2 L396,534.8 L396.9,545 L399.4,660.4 L427.7,660.4 L430.5,636.3 L433.3,660.4 L433.8,656.5 L433.4,603.4 L434.3,589.6 L435.2,595.4 L437.2,660.4 L453.9,660.4 L456,573.6 L456.9,561.6 L457.8,585.8 L459.9,660.4 L460.5,659.2 L460.3,629.7 L461.2,617.1 L462.1,620.1 L464.7,660.4 L476.9,660.4 L480,652 L483.1,660.4 L494.2,660.4 L498,650 L501.8,660.4 L513.9,660.4 L516.6,606.7 L517.5,589.6 L518.4,599.3 L521.1,660.4 L521.1,652.7 L521,645 L523.8,660.4 L524.3,660.4 L527,637 L529.7,660.4 L536.7,660.4 L536.7,660.4 L62.2,660.4 Z" fill="#7eb26d" fill-opacity="0.1" stroke="none"/><path d="M62.2,660.4 L62.2,656.4 L60.9,635 L61.8,626.7 L62.7,633.1 L64.4,660.4 L65.4,651.9 L65.5,606.6 L66.4,598 L67.3,608 L70,660.4 L70,650.9 L70,650 L73.1,660.4 L74.7,660.4 L77,629.7 L77.9,624.8 L78.8,631.2 L81.1,660.4 L81.1,657.8 L80.1,638.3 L81,630 L81.9,631.6 L84.8,660.4 L85.7,660.4 L87.7,441.6 L88.6,408.4 L89.5,458.5 L91.5,660.4 L92.4,651.4 L92.3,543.4 L93.2,522.5 L94.1,553.7 L96.9,660.4 L97.5,657.5 L98,640 L101,660.4 L101,660.4 L103.8,635.6 L104.7,628.6 L105.6,634.6 L108.4,660.4 L114,660.4 L116.5,522 L117.4,464 L118.3,492.3 L120.8,660.4 L121.4,660.4 L125,648 L128.6,660.4 L131.2,660.4 L133.7,550.4 L134.6,510 L135.5,530.7 L138,660.4 L139.5,660.4 L142.1,503.7 L143,463.2 L143.9,485.2 L146.5,660.4 L146.7,652.9 L146,521.7 L146.9,506.8 L147.8,542.5 L149.8,660.4 L152.1,660.4 L154,538.6 L154.9,527.1 L155.8,536.6 L157.7,660.4 L158.6,656.3 L158.6,608.3 L159.5,601.8 L160.4,605.1 L163.2,660.4 L168.4,660.4 L170.1,625.7 L171,615.2 L171.9,623.2 L173.6,660.4 L173.8,651.6 L173.1,600.5 L174,594.2 L174.9,605.3 L177.4,660.4 L178,650.6 L177.7,567.5 L178.6,534.8 L179.5,563.5 L181.6,660.4 L182.6,650 L182.7,618.3 L183.6,601.8 L184.5,615.8 L186.3,660.4 L187.1,657.9 L188,640 L190.7,660.4 L191.8,660 L191.9,590.7 L192.8,565.4 L193.7,585.6 L195.5,660.4 L196.5,650.5 L196.7,640.7 L197.6,635.2 L198.5,637.9 L200.9,660.4 L201.1,659.2 L200.3,580.2 L201.2,554 L202.1,563.7 L203.9,660.4 L204.3,655.3 L203.8,509.3 L204.7,495.3 L205.6,512 L207.7,660.4 L209,651.8 L209.5,627.3 L210.4,621 L211.3,625.5 L213.3,660.4 L214.6,660.4 L217.5,613 L218.4,601.8 L219.3,614.7 L222.2,660.4 L222.2,660 L221.4,585.8 L222.3,570.4 L223.2,582.8 L225.6,660.4 L227.4,656.2 L228.2,567.2 L229.1,538.6 L230,557.8 L232.6,660.4 L233.1,660.4 L235.1,634.4 L236,624.8 L236.9,627.2 L238.9,660.4 L240.9,660.4 L243.6,563.1 L244.5,550.1 L245.4,555.6 L248.1,660.4 L249.1,651.3 L249.3,577.3 L250.2,542.5 L251.1,548.5 L253,660.4 L253.5,660.4 L255.8,606.7 L256.7,594.2 L257.6,608.1 L259.9,660.4 L260.8,660.4 L262.7,612.9 L263.6,601.8 L264.5,608.8 L266.4,660.4 L266.6,657.3 L265.8,596.3 L266.7,570.4 L267.6,580 L270.3,660.4 L271.1,652 L271.1,596.8 L272,581.9 L272.9,587.6 L274.9,660.4 L276.4,659.4 L278,640 L281.4,660.4 L281.9,660.4 L284.5,627.2 L285.4,617.1 L286.3,626.1 L288.9,660.4 L289.1,656.1 L288.4,571.9 L289.3,554 L290.2,567.7 L292.7,660.4 L293.8,659.4 L294,642 L294.9,635 L295.8,636.4 L298.6,660.4 L298.7,657.2 L298,634.7 L298.9,624.8 L299.8,630.1 L301.7,660.4 L303.2,649.8 L303.7,612.8 L304.6,605.6 L305.5,613.4 L307.7,660.4 L308.8,660.4 L312,645 L315.2,660.4 L316.5,660.4 L320,648 L323.5,660.4 L324.8,652.6 L325.2,630 L326.1,624.3 L327,628.5 L329.6,660.4 L329.8,650.3 L330,650 L332.8,660.4 L339.9,660.4 L342.4,574.1 L343.3,546.3 L344.2,555.9 L346.7,660.4 L353.2,660.4 L355.4,622.2 L356.3,609.5 L357.2,617.9 L359.4,660.4 L374.9,660.4 L376.8,625 L377.7,617.1 L378.6,626.9 L380.5,660.4 L385.1,660.4 L387.1,588.1 L388,578 L388.9,587.1 L390.9,660.4 L392.6,660.4 L395.1,568.2 L396,534.8 L396.9,545 L399.4,660.4 L427.7,660.4 L430.5,636.3 L433.3,660.4 L433.8,656.5 L433.4,603.4 L434.3,589.6 L435.2,595.4 L437.2,660.4 L453.9,660.4 L456,573.6 L456.9,561.6 L457.8,585.8 L459.9,660.4 L460.5,659.2 L460.3,629.7 L461.2,617.1 L462.1,620.1 L464.7,660.4 L476.9,660.4 L480,652 L483.1,660.4 L494.2,660.4 L498,650 L501.8,660.4 L513.9,660.4 L516.6,606.7 L517.5,589.6 L518.4,599.3 L521.1,660.4 L521.1,652.7 L521,645 L523.8,660.4 L524.3,660.4 L527,637 L529.7,660.4 L536.7,660.4" fill="none" stroke="#7eb26d" stroke-width="1.15" stroke-linejoin="round"/><path d="M62.2,653.8 L63.9,648.4 L65.8,648.1 L67.6,654 L70.1,659.5 L72.5,659.6 L74.9,653 L76.9,647.2 L78.6,653.2 L80.3,654.1 L82.9,647.8 L84.9,647.2 L86.8,654.4 L88.8,648.4 L90.6,647.5 L92.4,654.4 L94.6,648.3 L96.3,647.7 L98.1,654.5 L100.4,659.6 L102.4,647.3 L104.5,653.1 L106.5,654.1 L108.3,653.9 L110.1,659.9 L112.6,660.3 L114.6,653.3 L117,659.1 L118.9,647.9 L121.1,653.7 L122.7,654.2 L124.5,647.8 L127,653.1 L129.4,641.9 L131.7,647.3 L134,654.3 L136.1,648.4 L137.8,647.8 L139.6,653.5 L141.7,659 L143.7,647.8 L145.7,647.4 L147.6,654 L149.6,653.3 L152.1,653.2 L153.8,648.2 L155.8,648.1 L158,653.9 L160.1,648 L162.1,647.9 L163.7,647.1 L165.3,647.7 L167.9,647.7 L170.3,654.3 L172,647.2 L173.9,653.5 L175.6,659 L177.7,653.6 L180.2,647.3 L182.8,660 L185.1,660 L187.1,660.1 L189.1,653.8 L191.3,653.8 L193.2,648.3 L195.3,648 L197.9,653.1 L199.8,648.2 L202.4,653.3 L204.1,647.9 L205.8,653.8 L208.1,647.1 L210.4,648 L212.7,654.2 L214.9,659.3 L217.2,659.7 L219.6,659 L221.3,660.4 L223.7,659.7 L226.3,659.8 L228.7,659.5 L230.6,654.1 L232.6,641.7 L234.2,641.2 L236.2,647.8 L238.6,653.9 L240.4,654 L243,654.1 L244.9,653.2 L247.5,647.8 L249.6,647.4 L251.7,647.8 L253.8,648 L255.8,659.9 L258.3,659.6 L260,653.5 L262.5,647.2 L264.6,653.6 L267.2,660.1 L269.1,659.2 L271.3,653.5 L273.7,653.2 L275.7,647.4 L277.5,648 L279.2,660.2 L281.3,659.3 L283.6,654 L285.9,648 L287.6,654.5 L289.4,653.6 L291.9,653.7 L293.6,660.2 L295.7,654.3 L297.5,641.8 L299.9,648.6 L302.3,653.4 L304.2,647.7 L306.7,648.5 L308.5,648.6 L310.3,653.4 L311.9,648.2 L313.6,647.3 L315.5,647.4 L317.4,647.2 L319.5,648.2 L321.5,648.3 L323.4,647.9 L325.8,654.2 L327.8,648 L329.7,653.2 L331.7,653.1 L333.7,653.7 L335.7,648.2 L337.3,648.1 L339.1,648.5 L340,660.4 L360.7,660.4 L363,650.4 L365.3,660.4 L369.4,660.4 L371.1,650.4 L372.8,660.4 L381.6,660.4 L383.6,655.4 L385.5,660.4 L392.6,660.4 L394.9,633.2 L397.2,660.4 L401.9,660.4 L404.1,654.4 L406.4,660.4 L430.3,660.4 L432,654.4 L433.7,660.4 L435.3,660.4 L437.2,650.4 L439,660.4 L450.9,660.4 L453,655.4 L455.2,660.4 L490.7,660.4 L492.6,655.4 L494.5,660.4 L495.7,657.9 L496.9,650.4 L499.2,660.4 L501,660.4 L503.3,650.4 L505.7,660.4 L508.2,660.4 L510.2,650.4 L512.2,660.4 L519.6,660.4 L521.4,654.4 L523.2,660.4 L528.5,660.4 L530.5,654.4 L532.4,660.4 L536.7,660.4" fill="none" stroke="#eab839" stroke-width="1.4" stroke-linejoin="round"/><path d="M62.2,660.4 L66.3,660.4 L68,629.6 L69.7,660.4 L71.7,660.4 L73.8,644.4 L76,660.4 L76.7,649.6 L77.5,654.4 L79.3,660.4 L79.7,660.4 L81.7,654.4 L83.8,660.4 L84.1,660.4 L86,627.3 L87.9,660.4 L89.6,660.4 L91.4,644.4 L93.2,660.4 L99.6,660.4 L101.7,652.4 L103.8,660.4 L105.1,660.4 L106.9,640.4 L108.7,660.4 L115.5,660.4 L117.8,654.4 L120.1,660.4 L121.3,660.4 L123,654.4 L124.7,660.4 L129.6,660.4 L131.6,634 L133.6,660.4 L145.5,660.4 L147.5,638.7 L149.5,660.4 L156.5,660.4 L158.4,654.4 L160.2,660.4 L170.2,660.4 L172.4,636.4 L174.6,660.4 L204.6,660.4 L206.5,636.4 L208.4,660.4 L222.5,660.4 L224.6,638.7 L226.7,660.4 L237.3,660.4 L239.3,640.4 L241.4,660.4 L270.5,660.4 L272.3,629.6 L274.1,660.4 L285,660.4 L286.9,644.4 L288.8,660.4 L289.6,660.4 L291.3,648.4 L293,660.4 L294.9,660.4 L296.6,640.4 L298.4,660.4 L298.9,660.4 L301.2,640.4 L303.5,660.4 L306.9,660.4 L308.7,654.4 L310.6,660.4 L321.9,660.4 L324,644.4 L326.2,660.4 L326.5,660.4 L328.2,644.4 L329.8,660.4 L331.5,660.4 L333.5,640.4 L335.6,660.4 L339.5,660.4 L341.4,654.4 L343.3,660.4 L372.2,660.4 L374.2,654.4 L376.2,660.4 L376.5,660.4 L378.4,654.4 L380.2,660.4 L386.3,660.4 L388,628.6 L389.7,660.4 L391.3,660.4 L393.1,649.4 L395,660.4 L401.4,660.4 L403.2,652.4 L405,660.4 L452.8,660.4 L454.5,654.4 L456.2,660.4 L456.7,660.4 L458.9,645.9 L461.1,660.4 L473.5,660.4 L475.3,652.4 L477.2,660.4 L505.2,660.4 L507.1,645.9 L509,660.4 L515.2,660.4 L517.5,636.3 L519.8,660.4 L520.6,649.8 L521.3,652.4 L523.5,660.4 L536.7,660.4" fill="none" stroke="#6ed0e0" stroke-width="1.4" stroke-linejoin="round"/><defs><clipPath id="cbr"><rect x="977" y="390" width="475" height="271"/></clipPath></defs><g clip-path="url(#cbr)" fill="none" stroke-width="1.3" stroke-linejoin="bevel"><path d="M977.6,526.4 L979.5,700.4 L980.7,700.4 L982.5,496.1 L983.8,461.1 L985.7,700.4 L987.5,700.4 L989,500.3 L990.7,572.2 L992,500.4 L993.4,496.3 L994.9,506.3 L996.6,453 L998.2,456.7 L999.8,466.1 L1001.7,700.4 L1003.3,515 L1005,491.4 L1006.5,513.3 L1008.2,478.6 L1009.9,700.4 L1011.1,700.4 L1012.6,570.3 L1014.7,491.9 L1016.3,554.2 L1017.4,700.4 L1019.4,529.5 L1020.7,527 L1022.3,517.5 L1023.7,700.4 L1025.3,533.7 L1027.1,597.6 L1028.9,505 L1030.4,571.1 L1032.3,558.4 L1033.6,700.4 L1034.9,463.9 L1037,491 L1038.3,700.4 L1039.7,700.4 L1041.4,700.4 L1043.4,597 L1044.5,700.4 L1046.3,614.6 L1048,700.4 L1049.6,543.8 L1051.3,508.6 L1053,524.5 L1054.2,700.4 L1056.1,700.4 L1057.8,700.4 L1059.1,471.5 L1061.1,441.4 L1062.4,700.4 L1063.8,700.4 L1065.6,700.4 L1067.5,700.4 L1068.5,506.1 L1070.4,700.4 L1072.2,466.8 L1073.9,482.1 L1075,700.4 L1076.5,448.3 L1078.1,700.4 L1079.7,504.7 L1081.6,469.1 L1083,700.4 L1085.1,700.4 L1086.2,464.1 L1088.2,454.7 L1089.4,472.7 L1091.4,476.1 L1093.1,522.3 L1094.5,502.2 L1096.2,512.8 L1097.5,525.6 L1098.9,522.3 L1100.5,625 L1102.3,540.4 L1104.3,700.4 L1105.3,700.4 L1107.1,544.4 L1109.1,522.4 L1110.2,557.7 L1111.8,612.9 L1113.4,509.5 L1115.4,438.3 L1116.7,434.4 L1118.2,502 L1119.8,545.8 L1121.9,700.4 L1123,572.1 L1125,491.9 L1126.3,476.4 L1128,700.4 L1129.9,700.4 L1131,700.4 L1132.9,700.4 L1134.5,700.4 L1136.1,517.6 L1137.4,545.9 L1139.1,602.3 L1141.1,492 L1142.2,700.4 L1144.3,504.7 L1145.3,512.1 L1147.5,488.7 L1149.1,462.3 L1150.6,492.6 L1151.8,504.7 L1153.3,508.8 L1155.5,527.4 L1157.1,543.6 L1158.7,700.4 L1159.7,700.4 L1161.4,700.4 L1163.3,476.5 L1164.8,528.1 L1166.2,700.4 L1168,700.4 L1169.3,443.7 L1171.1,467.5 L1173.1,700.4 L1174.4,553.3 L1175.7,700.4 L1177.4,495.1 L1179,475.8 L1180.8,476.2 L1182.3,440.4 L1184.3,460.9 L1185.4,436.8 L1187.5,450.1 L1189,700.4 L1190.2,647.4 L1191.7,608.4 L1193.6,606.8 L1195.2,619.8 L1196.5,619.1 L1198.5,555.5 L1200,554.8 L1201.9,517.4 L1203.4,546.7 L1204.7,520.9 L1206.7,503.3 L1207.9,700.4 L1209.5,542.8 L1211.5,512 L1212.9,519.9 L1214.2,583.2 L1215.9,513.1 L1217.4,486.5 L1219.4,505.1 L1221.1,502.4 L1222.5,507.5 L1224.1,553.5 L1225.5,529.4 L1226.9,517.8 L1229,541.1 L1230.5,517.3 L1231.8,495.3 L1233.8,516.2 L1235.3,443.3 L1236.8,452.1 L1238.5,542.8 L1240.1,532.3 L1241.4,569.2 L1243,531.6 L1244.8,503.4 L1246.6,700.4 L1248,521.9 L1249.3,527.4 L1251.2,598.7 L1252.8,700.4 L1254.6,529.1 L1255.8,700.4 L1257.8,484.4 L1259.3,460.2 L1261.1,479 L1262.1,570.8 L1264.2,531.6 L1265.3,491.2 L1267,564.3 L1268.7,493.4 L1270.6,700.4 L1272,487.6 L1273.5,469.8 L1275.5,700.4 L1276.9,700.4 L1278.4,641 L1280.2,530.9 L1281.4,700.4 L1283.1,503.7 L1284.6,469.3 L1286.3,501.5 L1287.9,700.4 L1289.3,700.4 L1291.2,557.3 L1292.6,526.9 L1294.2,542.4 L1295.8,594.3 L1297.3,612 L1299.5,611.6 L1300.7,597.4 L1302.5,526.8 L1303.7,523.9 L1305.5,508 L1307.1,474.2 L1308.7,700.4 L1310.6,459.7 L1311.9,700.4 M1343.9,700.4 L1345.9,515 L1347,700.4 L1348.9,515.9 L1350.3,700.4 L1352.1,700.4 M1369.5,700.4 L1370.9,700.4 L1372.7,528.3 L1374.4,540 L1376.2,529.4 L1377.7,467.6 L1379.2,492.5 L1380.7,464.7 L1382.7,442.9 L1384,448.9 L1385.6,700.4 L1387.4,700.4 L1388.9,700.4 L1390.3,642.5 L1392.1,598.1 L1393.8,601.7 L1394.9,614.1 L1396.6,700.4 L1398.6,474.9 L1399.7,498.1 L1401.8,700.4 L1402.9,655 L1404.9,640.8 L1406.1,647.1 L1407.9,628.4 L1409.9,639.6 L1411.4,700.4 L1412.6,624.9 L1414.4,599.9 L1416.3,587.1 L1417.4,700.4 L1419.1,546.4 L1421.1,526.6 L1422.4,546.2 L1423.7,655 L1425.9,631.1 L1427.4,653.1 L1428.6,700.4 L1430.2,700.4 L1432,520 L1433.6,511.6 L1435.3,548 L1437,537.8 L1438.7,557.7 L1439.7,510.2 L1441.6,492.2 L1443.1,700.4 L1444.8,700.4" stroke="#eab839"/><path d="M977.4,525.3 L979.4,700.4 L980.7,700.4 L982.6,494.7 L984,465.3 L985.9,700.4 L987.2,700.4 L988.5,503.5 L990.5,573.5 L992.3,503.1 L993.7,493.2 L995.5,508 L997,456.5 L998.5,456.3 L999.9,468.3 L1001.4,700.4 L1003,514.5 L1004.6,495.8 L1006.1,509.9 L1008.3,483.4 L1009.5,700.4 L1011.3,700.4 L1013.1,573.1 L1014.2,493.2 L1016.1,552.9 L1017.3,700.4 L1019.1,532.7 L1020.9,526.2 L1022.4,516.7 L1023.8,700.4 L1025.5,536.6 L1027,598.7 L1029.1,507 L1030.1,573.5 L1032.1,562.4 L1033.4,700.4 L1034.9,461.6 L1037,491.1 L1038.4,700.4 L1040.1,700.4 L1041.3,700.4 L1042.9,601.5 L1045.1,700.4 L1046.7,614.9 L1048,700.4 L1049.5,543.6 L1051.2,509.3 L1052.5,528 L1054.4,700.4 L1056.3,700.4 L1057.7,700.4 L1058.9,470.7 L1060.6,439.4 L1062.7,700.4 L1064.2,700.4 L1065.4,700.4 L1067.5,700.4 L1068.9,508.2 L1070.7,700.4 L1072.3,466.2 L1073.3,484.5 L1075.1,700.4 L1076.6,447.3 L1078.6,700.4 L1080.2,507.3 L1081.3,469.5 L1083.2,700.4 L1084.5,700.4 L1086.6,466.2 L1088,458.3 L1089.6,469.3 L1091.3,479.2 L1092.9,524 L1094.3,502.8 L1095.8,515.4 L1097.9,525.9 L1099.4,520 L1100.8,625.5 L1102.1,539.3 L1104.3,700.4 L1105.3,700.4 L1107.2,545 L1108.8,519.4 L1110.4,556.8 L1111.9,615.6 L1113.5,510 L1114.9,440.5 L1117.1,433.6 L1118.7,499.5 L1120.3,544.9 L1121.6,700.4 L1123.2,571.4 L1124.6,491.7 L1126.2,479.7 L1127.8,700.4 L1129.3,700.4 L1131.1,700.4 L1132.8,700.4 L1134.3,700.4 L1135.7,520.1 L1137.4,544.4 L1139.4,600.9 L1140.5,491.6 L1142.2,700.4 L1144.3,503.5 L1145.7,513.2 L1147.4,493 L1149,466.2 L1150.7,496 L1152.3,507 L1153.5,508.2 L1155,528.3 L1156.9,543.8 L1158.2,700.4 L1159.9,700.4 L1161.3,700.4 L1163,474.6 L1165.1,531.8 L1166.7,700.4 L1168.2,700.4 L1169.6,447.4 L1171.5,465.9 L1173,700.4 L1174.2,557.3 L1176.1,700.4 L1177.8,497.6 L1179.4,474.3 L1180.6,475 L1182.5,445.5 L1183.7,462.7 L1185.9,439.9 L1187.4,449 L1189,700.4 L1190.5,650.9 L1192.2,610.8 L1193.9,611.9 L1195.5,620.9 L1197.1,621.1 L1198.7,554 L1199.8,556.4 L1201.4,518.1 L1203.2,544.2 L1204.8,521.8 L1206.5,506.1 L1208.1,700.4 L1209.8,544.3 L1211.3,516.4 L1213,525.7 L1214.1,581 L1216.2,513.8 L1217.7,488.8 L1219.4,509.8 L1220.8,500 L1222.1,510.2 L1223.9,556.7 L1225.6,530.4 L1227,515 L1229,539.9 L1230.3,518.6 L1231.8,491.6 L1233.6,516.9 L1235.4,445.6 L1236.9,452.7 L1238.6,541.6 L1239.8,533.6 L1241.5,571.2 L1243.5,531 L1245.1,501.8 L1246.3,700.4 L1248.3,522.7 L1249.9,530.4 L1251.4,595.8 L1252.6,700.4 L1254.1,530 L1255.8,700.4 L1257.6,489 L1259,462.4 L1260.5,477.3 L1262.7,569.4 L1263.9,533.5 L1265.9,491.3 L1266.9,568.2 L1268.8,497.6 L1270.7,700.4 L1272.1,488.1 L1273.5,474.1 L1275.2,700.4 L1276.9,700.4 L1278.4,643.5 L1280.3,529.4 L1281.3,700.4 L1283.3,504.4 L1284.8,470.4 L1286.7,504.2 L1288.2,700.4 L1289.8,700.4 L1291.1,559 L1293.1,529.9 L1294.2,543.1 L1296.1,596.8 L1297.5,609.3 L1299.3,612.4 L1301,599.8 L1302.4,525.2 L1304.3,525.6 L1305.8,509.8 L1307.1,474.2 L1309.1,700.4 L1310.5,460.3 L1311.8,700.4 M1343.8,700.4 L1345.8,515.6 L1347.4,700.4 L1348.5,513.1 L1350.4,700.4 L1352.3,700.4 M1369.4,700.4 L1371.4,700.4 L1372.7,526.5 L1374.3,539.5 L1376.3,527.3 L1377.4,473.3 L1379.5,493.2 L1380.7,462.4 L1382.1,443.9 L1383.9,449.6 L1385.5,700.4 L1387.5,700.4 L1388.6,700.4 L1390.7,640.9 L1392.2,602.2 L1393.8,602.7 L1395,612.7 L1397,700.4 L1398.4,478.8 L1400.2,502.4 L1401.4,700.4 L1403.5,655 L1404.7,640.6 L1406.2,648.6 L1407.7,628.9 L1409.6,641 L1411.1,700.4 L1412.6,624.6 L1414.1,601.3 L1416.2,591.7 L1417.7,700.4 L1419.4,548.8 L1420.7,528.1 L1422.7,547.2 L1424.1,655 L1425.5,634.3 L1427.4,653.3 L1428.7,700.4 L1430.3,700.4 L1431.9,525 L1433.9,512.6 L1435.2,549.2 L1437.1,540.2 L1438.3,559.7 L1439.9,509.5 L1441.8,494.5 L1443.3,700.4 L1444.9,700.4" stroke="#6ed0e0"/><path d="M977.7,547.6 L979,700.4 L981,700.4 L982.2,523.9 L984.2,494.3 L985.6,700.4 L987.5,700.4 L989,529.9 L990.1,582.7 L992.1,531.1 L993.3,512.7 L995,517.3 L996.6,472.8 L998.5,469.4 L999.9,496.8 L1001.7,700.4 L1003.1,522 L1004.9,505.1 L1006.1,512.9 L1008,505.5 L1009.8,700.4 L1010.9,700.4 L1012.6,586.9 L1014.3,495.2 L1016.2,555.3 L1017.4,700.4 L1019.2,560.8 L1020.5,534.8 L1022.3,541.8 L1023.7,700.4 L1025.7,542.5 L1027.3,602.3 L1029.1,515 L1030.3,606.4 L1032,574.9 L1033.3,700.4 L1035.3,484.7 L1036.7,512.2 L1038.2,700.4 L1039.9,700.4 L1041.4,700.4 L1043.4,616.4 L1044.8,700.4 L1046.5,614.2 L1047.8,700.4 L1049.7,549.4 L1051.4,546.2 L1053,558.3 L1054.6,700.4 L1055.7,700.4 L1057.4,700.4 L1059.4,479.4 L1060.6,468.6 L1062.3,700.4 L1063.8,700.4 L1065.7,700.4 L1067.5,700.4 L1068.6,508.7 L1070.3,700.4 L1072.2,502.4 L1073.3,483.8 L1075,700.4 L1076.8,479.8 L1078.7,700.4 L1080,537 L1081.3,483.5 L1083.2,700.4 L1084.8,700.4 L1086.1,467.6 L1088.1,493.9 L1089.6,503.8 L1091.4,499.8 L1092.5,538.7 L1094.5,519.7 L1096.2,513.5 L1097.3,548 L1099.2,555.9 L1100.9,626.7 L1102.5,562 L1103.8,700.4 L1105.4,700.4 L1106.9,564.3 L1108.5,547.6 L1110.5,561.7 L1112,622.6 L1113.3,518.1 L1115.3,444.6 L1116.6,464.9 L1118.4,506.3 L1120.1,555.7 L1121.3,700.4 L1123,580.9 L1125,499.1 L1126.6,507.1 L1127.7,700.4 L1129.3,700.4 L1131.5,700.4 L1133,700.4 L1134.1,700.4 L1135.8,530.8 L1137.7,559.7 L1139.5,625.8 L1140.6,508.9 L1142.1,700.4 L1143.7,534.9 L1145.4,541.4 L1147.2,506.7 L1149,480.2 L1150.1,527.7 L1152,542.8 L1153.6,542 L1155.4,535.2 L1156.8,542.2 L1158.3,700.4 L1159.9,700.4 L1161.3,700.4 L1162.9,506.9 L1164.8,561.5 L1166.1,700.4 L1168.1,700.4 L1169.6,463.8 L1171.5,478.6 L1172.8,700.4 L1174.6,556.6 L1176.2,700.4 L1177.5,509.4 L1179.4,494.5 L1180.9,490.1 L1182.6,482 L1183.7,461.3 L1185.7,468.8 L1187.1,451.8 L1188.9,700.4 L1190.6,655 L1192.3,643.8 L1193.8,644.9 L1195.4,628.2 L1196.6,630.1 L1198.5,575.8 L1199.9,557.6 L1201.3,536.7 L1203.3,555.4 L1205,550.6 L1206.6,543.2 L1207.8,700.4 L1209.3,548 L1211.5,532.5 L1213,542.5 L1214.6,612.2 L1216.2,513.1 L1217.7,508.6 L1219.5,513.7 L1220.9,506.3 L1222.3,521.4 L1224.3,582.1 L1225.5,531.1 L1226.9,551.4 L1229.1,547.4 L1230.5,522 L1232.2,522.6 L1233.4,532.5 L1235.3,456.4 L1237.1,455.4 L1238.5,548.6 L1240.1,561.7 L1241.3,569.1 L1242.9,534.6 L1244.8,515.2 L1246.7,700.4 L1248.2,524.5 L1249.5,530 L1251.2,603.5 L1253,700.4 L1254.3,539.6 L1256.2,700.4 L1257.4,496.2 L1259.4,495.9 L1260.5,479.5 L1262.2,578.6 L1264.1,539 L1265.3,490.2 L1267.3,587 L1268.5,498.4 L1270.1,700.4 L1272.3,502 L1273.8,494.4 L1274.9,700.4 L1277,700.4 L1278.4,645.2 L1280.2,531.3 L1281.4,700.4 L1283,511.1 L1284.6,486.1 L1286.5,506.3 L1288,700.4 L1289.9,700.4 L1291.4,566.8 L1292.5,548.1 L1294.4,541.8 L1295.7,609.2 L1297.4,611.2 L1298.9,611.6 L1300.8,621.1 L1302.4,562.5 L1303.8,538.3 L1305.9,532.8 L1307.5,511.1 L1308.5,700.4 L1310.4,496.6 L1311.8,700.4 M1343.8,700.4 L1345.4,550.1 L1346.9,700.4 L1349.1,531.5 L1350.4,700.4 L1352.2,700.4 M1369.3,700.4 L1371.2,700.4 L1372.6,546.9 L1374.1,543.7 L1375.8,549.2 L1377.7,482.7 L1379.2,492.6 L1380.6,486.1 L1382.5,468.6 L1384.2,450.5 L1385.9,700.4 L1387.4,700.4 L1389.1,700.4 L1390.2,651.2 L1392.1,619.2 L1393.3,638 L1395.2,612.2 L1396.5,700.4 L1398.6,494.8 L1399.9,511.7 L1401.7,700.4 L1403,655 L1404.8,655 L1406.7,655 L1408.2,629.1 L1409.6,650.5 L1411,700.4 L1412.7,641.2 L1414.1,608.6 L1416.2,592 L1417.3,700.4 L1419.2,550.7 L1420.9,555.5 L1422.1,548.2 L1423.7,655 L1425.7,655 L1427,655 L1428.6,700.4 L1430.5,700.4 L1432.3,527.5 L1433.9,542.5 L1435.5,565.8 L1436.5,561.6 L1438.1,573.7 L1440.3,512.7 L1441.5,529.4 L1443.2,700.4 L1445,700.4" stroke="#ef843c"/></g>
<g class="ax"><text x="53.8" y="47.7" text-anchor="end">20 ops</text><text x="53.8" y="114" text-anchor="end">15 ops</text><text x="53.8" y="180.4" text-anchor="end">10 ops</text><text x="53.8" y="246.8" text-anchor="end">5 ops</text><text x="53.8" y="313.1" text-anchor="end">0 ops</text><text x="966" y="46" text-anchor="end">10 ms</text><text x="966" y="99.1" text-anchor="end">1 ms</text><text x="968" y="153.2" text-anchor="end">100 μs</text><text x="968" y="206.3" text-anchor="end">10 μs</text><text x="968" y="259.4" text-anchor="end">1 μs</text><text x="968" y="312.5" text-anchor="end">0 μs</text><text x="56.5" y="399.7" text-anchor="end">1.5 ops</text><text x="56.5" y="488" text-anchor="end">1.0 ops</text><text x="56.5" y="576.4" text-anchor="end">0.5 ops</text><text x="56.5" y="664.7" text-anchor="end">0 ops</text><text x="972.5" y="398.9" text-anchor="end">134 s</text><text x="972.5" y="428.4" text-anchor="end">34 s</text><text x="970.3" y="457.8" text-anchor="end">8 s</text><text x="970.3" y="487.3" text-anchor="end">2 s</text><text x="972.5" y="516.7" text-anchor="end">524 ms</text><text x="972.5" y="546.2" text-anchor="end">131 ms</text><text x="972.5" y="575.7" text-anchor="end">33 ms</text><text x="970.3" y="605.1" text-anchor="end">8 ms</text><text x="970.3" y="634.6" text-anchor="end">2 ms</text><text x="972.5" y="664" text-anchor="end">512 μs</text><text x="103.3" y="327" text-anchor="middle">21:00</text><text x="182.9" y="327" text-anchor="middle">21:30</text><text x="262.5" y="327" text-anchor="middle">22:00</text><text x="342.2" y="327" text-anchor="middle">22:30</text><text x="421.8" y="327" text-anchor="middle">23:00</text><text x="501.4" y="327" text-anchor="middle">23:30</text><text x="1019.2" y="327" text-anchor="middle">21:00</text><text x="1098.6" y="327" text-anchor="middle">21:30</text><text x="1178.1" y="327" text-anchor="middle">22:00</text><text x="1257.5" y="327" text-anchor="middle">22:30</text><text x="1337" y="327" text-anchor="middle">23:00</text><text x="1416.4" y="327" text-anchor="middle">23:30</text><text x="105.6" y="679" text-anchor="middle">21:00</text><text x="184.9" y="679" text-anchor="middle">21:30</text><text x="264.1" y="679" text-anchor="middle">22:00</text><text x="343.4" y="679" text-anchor="middle">22:30</text><text x="422.6" y="679" text-anchor="middle">23:00</text><text x="501.9" y="679" text-anchor="middle">23:30</text><text x="1022" y="679" text-anchor="middle">21:00</text><text x="1101.2" y="679" text-anchor="middle">21:30</text><text x="1180.4" y="679" text-anchor="middle">22:00</text><text x="1259.5" y="679" text-anchor="middle">22:30</text><text x="1338.7" y="679" text-anchor="middle">23:00</text><text x="1417.9" y="679" text-anchor="middle">23:30</text></g>
<text x="449.5" y="23" text-anchor="middle" class="tt">WAL sync operations</text><text x="1364.5" y="23" text-anchor="middle" class="tt">WAL sync duration</text><text x="449" y="375.1" text-anchor="middle" class="tt">Compaction operations</text><text x="1364.5" y="375.1" text-anchor="middle" class="tt">Compaction duration</text>
<text x="799.3" y="53.4" text-anchor="end" class="hd">max</text><text x="867.3" y="53.4" text-anchor="end" class="hd">current</text><rect x="559.2" y="59.2" width="318.5" height="25.8" fill="#262629"/><rect x="570.2" y="71.2" width="13" height="4" fill="#7eb26d"/><text x="591.2" y="76">sync</text><text x="799.3" y="76" text-anchor="end">18.0 ops</text><text x="867.3" y="76" text-anchor="end">1.8 ops</text><text x="1707.6" y="53.4" text-anchor="end" class="hd">max</text><text x="1782.7" y="53.4" text-anchor="end" class="hd">current</text><rect x="1475.3" y="59.2" width="318.3" height="25.8" fill="#262629"/><rect x="1485.4" y="71.2" width="13" height="4" fill="#7eb26d"/><text x="1506.4" y="76">max</text><text x="1707.6" y="76" text-anchor="end">5.6 ms</text><text x="1782.7" y="76" text-anchor="end">1.1 ms</text><rect x="1485.4" y="97.2" width="13" height="4" fill="#eab839"/><text x="1506.4" y="102">99%</text><text x="1707.6" y="102" text-anchor="end">5.6 ms</text><text x="1782.7" y="102" text-anchor="end">1.1 ms</text><rect x="1475.3" y="111.2" width="318.3" height="25.8" fill="#262629"/><rect x="1485.4" y="123.2" width="13" height="4" fill="#6ed0e0"/><text x="1506.4" y="128">95%</text><text x="1707.6" y="128" text-anchor="end">1.4 ms</text><text x="1782.7" y="128" text-anchor="end">1.1 ms</text><rect x="1485.4" y="149.2" width="13" height="4" fill="#ef843c"/><text x="1506.4" y="154">avg</text><text x="1707.6" y="154" text-anchor="end">839.5 μs</text><text x="1782.7" y="154" text-anchor="end">504.6 μs</text><text x="809.5" y="405.4" text-anchor="end" class="hd">max</text><text x="867.3" y="405.4" text-anchor="end" class="hd">current</text><rect x="559.2" y="411.2" width="318.5" height="25.8" fill="#262629"/><rect x="570.2" y="423.2" width="13" height="4" fill="#7eb26d"/><text x="591.2" y="428">compaction</text><text x="809.5" y="428" text-anchor="end">1.4 ops</text><text x="867.3" y="428" text-anchor="end">0 ops</text><rect x="570.2" y="449.2" width="13" height="4" fill="#eab839"/><text x="591.2" y="454">flush</text><text x="809.5" y="454" text-anchor="end">0.2 ops</text><text x="867.3" y="454" text-anchor="end">0 ops</text><rect x="559.2" y="463.2" width="318.5" height="25.8" fill="#262629"/><rect x="570.2" y="475.2" width="13" height="4" fill="#6ed0e0"/><text x="591.2" y="480">ingestion</text><text x="809.5" y="480" text-anchor="end">0.2 ops</text><text x="867.3" y="480" text-anchor="end">0 ops</text><text x="1731.4" y="405.4" text-anchor="end" class="hd">max</text><text x="1782.7" y="405.4" text-anchor="end" class="hd">current</text><rect x="1475.3" y="411.2" width="318.3" height="25.8" fill="#262629"/><rect x="1485.4" y="423.2" width="13" height="4" fill="#7eb26d"/><text x="1506.4" y="428">max</text><text x="1731.4" y="428" text-anchor="end">22.3 s</text><text x="1782.7" y="428" text-anchor="end">0 μs</text><rect x="1485.4" y="449.2" width="13" height="4" fill="#eab839"/><text x="1506.4" y="454">99%</text><text x="1731.4" y="454" text-anchor="end">22.1 s</text><text x="1782.7" y="454" text-anchor="end">0 μs</text><rect x="1475.3" y="463.2" width="318.3" height="25.8" fill="#262629"/><rect x="1485.4" y="475.2" width="13" height="4" fill="#6ed0e0"/><text x="1506.4" y="480">95%</text><text x="1731.4" y="480" text-anchor="end">19.0 s</text><text x="1782.7" y="480" text-anchor="end">0 μs</text><rect x="1485.4" y="501.2" width="13" height="4" fill="#ef843c"/><text x="1506.4" y="506">avg</text><text x="1731.4" y="506" text-anchor="end">18.1 s</text><text x="1782.7" y="506" text-anchor="end">0 μs</text>
<circle cx="899.4" cy="9.4" r="1.8" fill="#b4b4b4" fill-opacity="0.9"/><circle cx="897.9" cy="5.8" r="1.6" fill="#b4b4b4" fill-opacity="0.85"/><circle cx="894.3" cy="4.3" r="1.4" fill="#b4b4b4" fill-opacity="0.8"/><circle cx="890.7" cy="5.8" r="1.15" fill="#b4b4b4" fill-opacity="0.5"/><circle cx="889.2" cy="9.4" r="1.2" fill="#b4b4b4" fill-opacity="0.55"/><circle cx="890.7" cy="13" r="1.25" fill="#b4b4b4" fill-opacity="0.55"/><circle cx="894.3" cy="14.5" r="1.35" fill="#b4b4b4" fill-opacity="0.65"/><circle cx="897.9" cy="13" r="1.15" fill="#b4b4b4" fill-opacity="0.6"/><circle cx="1814.9" cy="9.1" r="1.8" fill="#b4b4b4" fill-opacity="0.9"/><circle cx="1813.4" cy="5.5" r="1.6" fill="#b4b4b4" fill-opacity="0.85"/><circle cx="1809.8" cy="4" r="1.4" fill="#b4b4b4" fill-opacity="0.8"/><circle cx="1806.2" cy="5.5" r="1.15" fill="#b4b4b4" fill-opacity="0.5"/><circle cx="1804.7" cy="9.1" r="1.2" fill="#b4b4b4" fill-opacity="0.55"/><circle cx="1806.2" cy="12.7" r="1.25" fill="#b4b4b4" fill-opacity="0.55"/><circle cx="1809.8" cy="14.2" r="1.35" fill="#b4b4b4" fill-opacity="0.65"/><circle cx="1813.4" cy="12.7" r="1.15" fill="#b4b4b4" fill-opacity="0.6"/><circle cx="899.4" cy="361.3" r="1.8" fill="#b4b4b4" fill-opacity="0.9"/><circle cx="897.9" cy="357.7" r="1.6" fill="#b4b4b4" fill-opacity="0.85"/><circle cx="894.3" cy="356.2" r="1.4" fill="#b4b4b4" fill-opacity="0.8"/><circle cx="890.7" cy="357.7" r="1.15" fill="#b4b4b4" fill-opacity="0.5"/><circle cx="889.2" cy="361.3" r="1.2" fill="#b4b4b4" fill-opacity="0.55"/><circle cx="890.7" cy="364.9" r="1.25" fill="#b4b4b4" fill-opacity="0.55"/><circle cx="894.3" cy="366.4" r="1.35" fill="#b4b4b4" fill-opacity="0.65"/><circle cx="897.9" cy="364.9" r="1.15" fill="#b4b4b4" fill-opacity="0.6"/><circle cx="1814.9" cy="361.1" r="1.8" fill="#b4b4b4" fill-opacity="0.9"/><circle cx="1813.4" cy="357.5" r="1.6" fill="#b4b4b4" fill-opacity="0.85"/><circle cx="1809.8" cy="356" r="1.4" fill="#b4b4b4" fill-opacity="0.8"/><circle cx="1806.2" cy="357.5" r="1.15" fill="#b4b4b4" fill-opacity="0.5"/><circle cx="1804.7" cy="361.1" r="1.2" fill="#b4b4b4" fill-opacity="0.55"/><circle cx="1806.2" cy="364.7" r="1.25" fill="#b4b4b4" fill-opacity="0.55"/><circle cx="1809.8" cy="366.2" r="1.35" fill="#b4b4b4" fill-opacity="0.65"/><circle cx="1813.4" cy="364.7" r="1.15" fill="#b4b4b4" fill-opacity="0.6"/>
<path d="M892.4,339.4 L897.4,339.4 L897.4,334.4" stroke="#5c5c5e" stroke-width="1.6" fill="none"/><path d="M1807.4,339.4 L1812.4,339.4 L1812.4,334.4" stroke="#5c5c5e" stroke-width="1.6" fill="none"/><path d="M892.4,691.4 L897.4,691.4 L897.4,686.4" stroke="#5c5c5e" stroke-width="1.6" fill="none"/><path d="M1807.4,691.4 L1812.4,691.4 L1812.4,686.4" stroke="#5c5c5e" stroke-width="1.6" fill="none"/>
<g>
<path d="M1756,666.7 L1808,666.7 A13,13 0 0 1 1821,679.7 L1821,705 L1756,705 Z" fill="#1e2230"/>
<line x1="1756" y1="687" x2="1821" y2="687" stroke="#2a3040" stroke-width="1"/>
<circle cx="1734.9" cy="686.8" r="29.2" fill="#2d3140"/>
<circle cx="1734.9" cy="686.8" r="28.3" fill="none" stroke="#252936" stroke-width="1.8"/>
<defs><linearGradient id="gl" x1="0" y1="0" x2="0" y2="1"><stop offset="0" stop-color="#e8344a"/><stop offset="0.5" stop-color="#f0843c"/><stop offset="1" stop-color="#f0c040"/></linearGradient>
<linearGradient id="gr" x1="0" y1="0" x2="0" y2="1"><stop offset="0" stop-color="#30d0c8"/><stop offset="1" stop-color="#80e070"/></linearGradient></defs>
<path d="M1734.9,661 A25.8,25.8 0 0 1 1747.8,709.1" fill="none" stroke="url(#gr)" stroke-width="2"/>
<path d="M1721.2,664.9 A25.8,25.8 0 0 0 1722,709.1" fill="none" stroke="url(#gl)" stroke-width="2"/>
<text x="1731" y="695.3" text-anchor="middle" style="font-size:25px;fill:#e8e8ea;font-weight:normal" textLength="26" lengthAdjust="spacingAndGlyphs">89</text>
<text x="1749.6" y="694.5" text-anchor="middle" style="font-size:9px;fill:#e0e0e0">%</text>
<path d="M1770.5,673.2 L1767.2,677 M1770.5,673.2 L1773.8,677 M1770.5,673.5 L1770.5,679.5" stroke="#3aa0e8" stroke-width="1.6" fill="none"/>
<path d="M1770.5,700.5 L1767.2,696.7 M1770.5,700.5 L1773.8,696.7 M1770.5,700.2 L1770.5,694" stroke="#20b030" stroke-width="1.6" fill="none"/>
<text x="1780.6" y="680.2" style="font-size:11.2px;fill:#e6e6e6" textLength="18" lengthAdjust="spacingAndGlyphs">166</text>
<text x="1800.5" y="680.5" style="font-size:8.5px;fill:#9a9ea8" textLength="14.5" lengthAdjust="spacingAndGlyphs">K/s</text>
<text x="1780.6" y="701.7" style="font-size:11.2px;fill:#e6e6e6" textLength="18" lengthAdjust="spacingAndGlyphs">562</text>
<text x="1800.5" y="702" style="font-size:8.5px;fill:#9a9ea8" textLength="14.5" lengthAdjust="spacingAndGlyphs">K/s</text>
</g>
</svg>
</body></html>
